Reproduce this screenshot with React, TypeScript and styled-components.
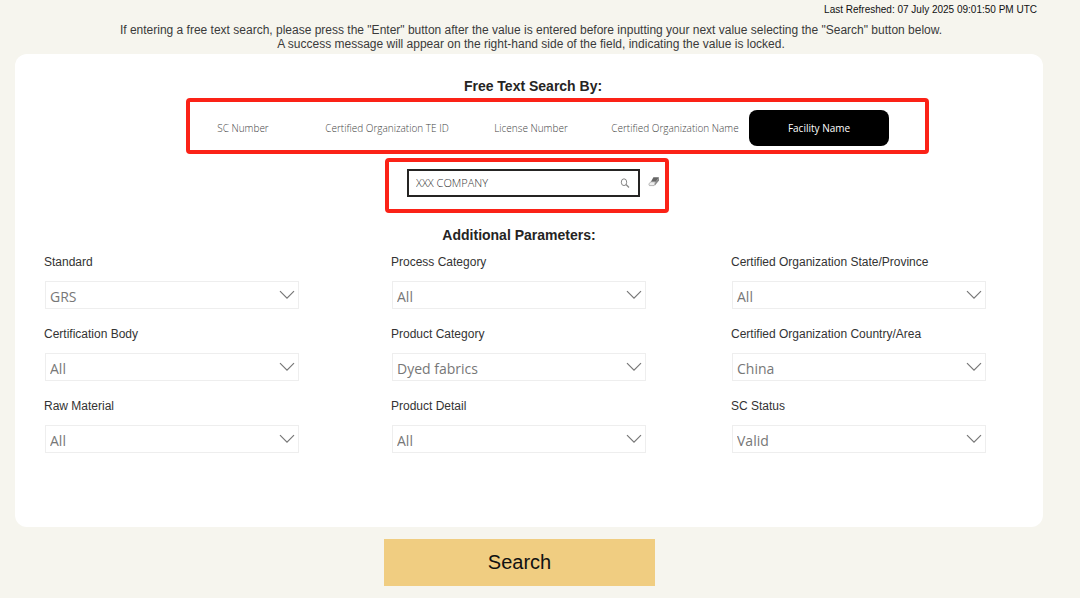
import React, { useId, useState } from "react";
import styled, { createGlobalStyle } from "styled-components";

const arial = `"Liberation Sans", Arial, sans-serif`;
const segoe = `"Open Sans", "Noto Sans", sans-serif`;
const red = "#fb2217";

const GlobalStyle = createGlobalStyle`
  *, *::before, *::after { box-sizing: border-box; }
  body { margin: 0; background: #f6f5ee; font-family: ${arial}; }
`;

const Page = styled.main`
  display: flex;
  flex-direction: column;
  align-items: center;
  padding: 3px 37px 12px 15px;
`;

const Refreshed = styled.p`
  align-self: flex-end;
  margin: 0 6px 6px 0;
  font-size: 10px;
  line-height: 14px;
  color: #111;
`;

const Intro = styled.p`
  margin: 0 0 3px;
  padding-left: 4px;
  font-size: 12px;
  line-height: 14px;
  text-align: center;
  color: #3a3a3a;
`;

const Card = styled.section`
  display: flex;
  flex-direction: column;
  align-items: center;
  width: 100%;
  padding: 22px 57px 74px 29px;
  border-radius: 12px;
  background: #fff;
`;

const Heading = styled.h2<{ $indent: number }>`
  margin: 0;
  padding-left: ${(p) => p.$indent}px;
  font-size: 14px;
  line-height: 20px;
  font-weight: 700;
  color: #252423;
`;

const TabBar = styled.div`
  position: relative;
  display: grid;
  grid-template-columns: repeat(5, 140px);
  gap: 4px;
  margin: 14px 0 12px 32px;

  &::after {
    content: "";
    position: absolute;
    inset: -12px -40px -8px 13px;
    border: 4px solid ${red};
    border-radius: 4px;
    pointer-events: none;
  }
`;

const Tab = styled.button<{ $active: boolean }>`
  height: 36px;
  padding: 0;
  border: 0;
  border-radius: 8px;
  background: ${(p) => (p.$active ? "#000" : "transparent")};
  color: ${(p) => (p.$active ? "#fff" : "#444")};
  font: ${(p) => (p.$active ? 400 : 300)} 10px/16px ${segoe};
  white-space: nowrap;
`;

const SearchFrame = styled.div`
  display: flex;
  align-items: flex-start;
  gap: 8px;
  height: 55px;
  margin: 0 0 12px 24px;
  padding: 7px 5px 0 18px;
  border: 4px solid ${red};
  border-radius: 4px;
`;

const SearchBox = styled.div`
  display: flex;
  align-items: center;
  width: 233px;
  height: 28px;
  padding: 0 8px 0 7px;
  border: 2px solid #252423;
`;

const SearchInput = styled.input`
  flex: 1;
  min-width: 0;
  padding: 0;
  border: 0;
  outline: 0;
  background: transparent;
  color: #333;
  font: 300 11px/16px ${segoe};
`;

const IconButton = styled.button`
  display: flex;
  padding: 0;
  border: 0;
  background: transparent;
`;

const EraserButton = styled(IconButton)`
  padding-top: 7px;
`;

const Fields = styled.div`
  display: grid;
  grid-template-columns: 347fr 340fr 255fr;
  row-gap: 17px;
  width: 100%;
  margin-top: 9px;
`;

const FieldBox = styled.div`
  display: flex;
  flex-direction: column;
  gap: 11px;
  max-width: 255px;
`;

const Label = styled.label`
  font-size: 12px;
  line-height: 16px;
  color: #333;
  white-space: nowrap;
`;

const SelectWrap = styled.div`
  display: grid;
  align-items: center;
  margin-left: 1px;

  & > * {
    grid-area: 1 / 1;
  }
`;

const Select = styled.select`
  appearance: none;
  width: 100%;
  height: 28px;
  padding: 4px 28px 0 4px;
  border: 1px solid #eee;
  border-radius: 0;
  background: #fff;
  color: #777;
  font: 400 14px/20px ${segoe};
`;

const Chevron = styled.svg`
  justify-self: end;
  margin-right: 4px;
  pointer-events: none;
`;

const SearchButton = styled.button`
  width: 271px;
  height: 47px;
  margin: 12px 19px 0 0;
  padding: 0 0 2px;
  border: 0;
  background: #f0cd81;
  color: #111;
  font: 400 20px/24px ${arial};
`;

const tabs = [
  "SC Number",
  "Certified Organization TE ID",
  "License Number",
  "Certified Organization Name",
  "Facility Name",
];

const fields = [
  ["Standard", "GRS"],
  ["Process Category", "All"],
  ["Certified Organization State/Province", "All"],
  ["Certification Body", "All"],
  ["Product Category", "Dyed fabrics"],
  ["Certified Organization Country/Area", "China"],
  ["Raw Material", "All"],
  ["Product Detail", "All"],
  ["SC Status", "Valid"],
];

function Field({ label, value }: { label: string; value: string }) {
  const id = useId();
  return (
    <FieldBox>
      <Label htmlFor={id}>{label}</Label>
      <SelectWrap>
        <Select id={id} defaultValue={value}>
          <option>{value}</option>
        </Select>
        <Chevron width="16" height="10" viewBox="0 0 16 10" fill="none" stroke="#777" strokeWidth="1.2">
          <path d="M1 1.2 8 8.2 15 1.2" />
        </Chevron>
      </SelectWrap>
    </FieldBox>
  );
}

export default function App() {
  const [active, setActive] = useState("Facility Name");
  const [query, setQuery] = useState("XXX COMPANY");

  return (
    <>
      <GlobalStyle />
      <Page>
        <Refreshed>Last Refreshed: 07 July 2025 09:01:50 PM UTC</Refreshed>
        <Intro>
          If entering a free text search, please press the "Enter" button after the value is entered
          before inputting your next value selecting the "Search" button below.
          <br />A success message will appear on the right-hand side of the field, indicating the
          value is locked.
        </Intro>
        <Card>
          <Heading $indent={36}>Free Text Search By:</Heading>
          <TabBar>
            {tabs.map((tab) => (
              <Tab
                key={tab}
                type="button"
                $active={tab === active}
                aria-pressed={tab === active}
                onClick={() => setActive(tab)}
              >
                {tab}
              </Tab>
            ))}
          </TabBar>
          <SearchFrame>
            <SearchBox>
              <SearchInput
                aria-label={active}
                value={query}
                onChange={(e) => setQuery(e.target.value)}
              />
              <IconButton type="button" aria-label="Search text">
                <svg width="10" height="10" viewBox="0 0 10 10" fill="none" stroke="#888">
                  <ellipse cx="4" cy="4.2" rx="2.7" ry="3.4" />
                  <path d="M6 6.6 9 9.4" strokeWidth="1.3" />
                </svg>
              </IconButton>
            </SearchBox>
            <EraserButton type="button" aria-label="Clear" onClick={() => setQuery("")}>
              <svg width="12" height="12" viewBox="0 0 12 12">
                <path d="M5.4 1.2H11L7.8 6H2.8Z" fill="#666" />
                <path d="M11 1.2V4.4L7 9.4V6.6Z" fill="#888" />
                <path d="M2.8 5.8H7.4L6.2 9.6H1.4Q.6 8.4 1.2 7.6Z" fill="#eee" stroke="#999" strokeWidth=".7" />
              </svg>
            </EraserButton>
          </SearchFrame>
          <Heading $indent={8}>Additional Parameters:</Heading>
          <Fields>
            {fields.map(([label, value]) => (
              <Field key={label} label={label} value={value} />
            ))}
          </Fields>
        </Card>
        <SearchButton type="button">Search</SearchButton>
      </Page>
    </>
  );
}
